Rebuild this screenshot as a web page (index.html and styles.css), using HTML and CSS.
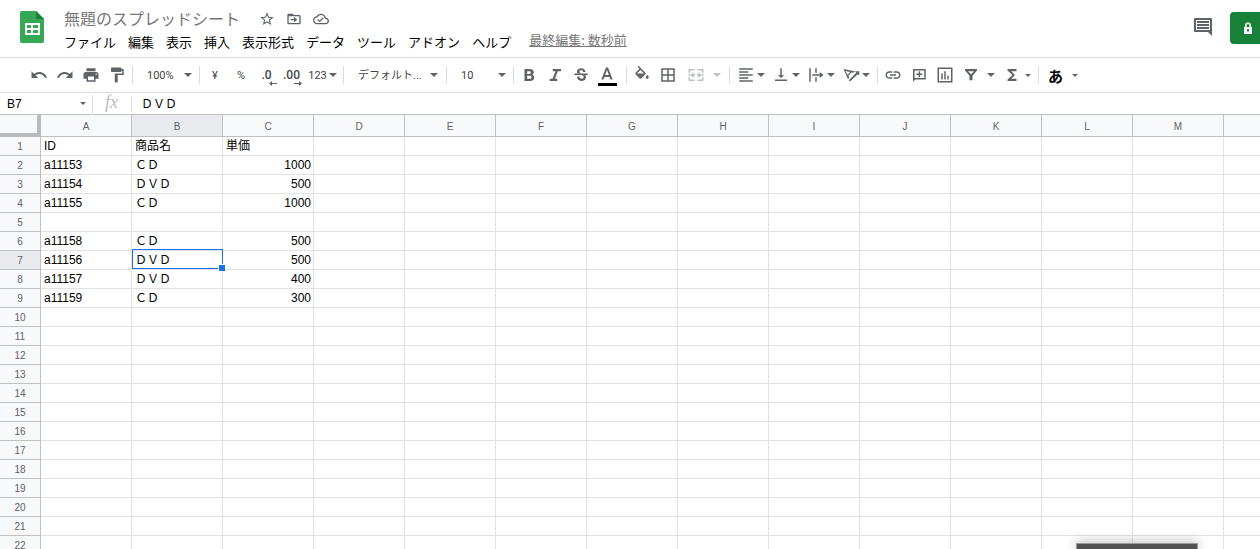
FILE: index.html
```html
<!DOCTYPE html>
<html lang="ja">
<head>
    <meta charset="UTF-8">
    <meta name="viewport" content="width=device-width, initial-scale=1.0">
    <title>無題のスプレッドシート</title>
    <link rel="stylesheet" href="styles.css">
</head>
<body>
    <header class="header">
        <svg class="logo" viewBox="0 0 24 32">
            <path fill="#34a853" d="M2 0h14l8 8v22a2 2 0 0 1-2 2H2a2 2 0 0 1-2-2V2a2 2 0 0 1 2-2z"/>
            <path fill="#188038" d="M16 0l8 8h-8z"/>
            <path fill="#fff" fill-rule="evenodd" d="M5 12h15v12H5zM7 14v3h4v-3zM13 14v3h5v-3zM7 19v3h4v-3zM13 19v3h5v-3z"/>
        </svg>
        <div class="header-main">
            <div class="title-row">
                <input class="title" type="text" aria-label="名前を変更" value="無題のスプレッドシート">
                <button class="title-btn" aria-label="スター"><svg viewBox="0 0 24 24"><path d="M22 9.24l-7.19-.62L12 2 9.19 8.63 2 9.24l5.46 4.73L5.82 21 12 17.27 18.18 21l-1.63-7.03L22 9.24zM12 15.4l-3.76 2.27 1-4.28-3.32-2.88 4.38-.38L12 6.1l1.71 4.04 4.38.38-3.32 2.88 1 4.28L12 15.4z"/></svg></button>
                <button class="title-btn" aria-label="移動"><svg viewBox="0 0 24 24"><path d="M20 6h-8l-2-2H4c-1.1 0-2 .9-2 2v12c0 1.1.9 2 2 2h16c1.1 0 2-.9 2-2V8c0-1.1-.9-2-2-2zm0 12H4V8h16v10zM7 12h5V9l5 4-5 4v-3H7z"/></svg></button>
                <button class="title-btn" aria-label="保存状況"><svg viewBox="0 0 24 24"><path d="M19.35 10.04C18.67 6.59 15.64 4 12 4 9.11 4 6.6 5.64 5.35 8.04 2.34 8.36 0 10.91 0 14c0 3.31 2.69 6 6 6h13c2.76 0 5-2.24 5-5 0-2.64-2.05-4.78-4.65-4.96zM19 18H6c-2.21 0-4-1.79-4-4 0-2.05 1.53-3.76 3.56-3.97l1.07-.11.5-.95C8.08 7.14 9.94 6 12 6c2.62 0 4.88 1.86 5.39 4.43l.3 1.5 1.53.11c1.56.1 2.78 1.41 2.78 2.96 0 1.65-1.35 3-3 3zm-9-3.82l-2.09-2.09L6.5 13.5 10 17l6.01-6.01-1.41-1.41z"/></svg></button>
            </div>
            <nav class="menu-row">
                <button>ファイル</button>
                <button>編集</button>
                <button>表示</button>
                <button>挿入</button>
                <button>表示形式</button>
                <button>データ</button>
                <button>ツール</button>
                <button>アドオン</button>
                <button>ヘルプ</button>
                <a class="last-edit" href="#">最終編集: 数秒前</a>
            </nav>
        </div>
        <button class="comments" aria-label="コメント履歴"><svg viewBox="0 0 20 20"><path fill-rule="evenodd" d="M2 1h16q1 0 1 1v17l-4-4H2q-1 0-1-1V2q0-1 1-1zM3 3v10h14V3z"/><path d="M4 4h12v2H4zM4 7h12v2H4zM4 10h12v2H4z"/></svg></button>
        <button class="share" aria-label="共有"><svg viewBox="0 0 10 12"><path fill="#fff" fill-rule="evenodd" d="M1 5h1V3.500a3 3 0 0 1 6 0V5h1v7H1zM3.500 5h3V3.500a1.500 1.500 0 0 0-3 0zM5 7a1.300 1.300 0 1 0 .01 0z"/></svg></button>
    </header>

    <div class="toolbar">
        <button class="tool" aria-label="元に戻す"><svg viewBox="0 0 24 24"><path d="M12.500 8c-2.650 0-5.050.990-6.900 2.600L2 7v9h9l-3.620-3.620c1.390-1.160 3.160-1.880 5.120-1.880 3.540 0 6.550 2.310 7.600 5.500l2.370-.780C21.080 11.030 17.150 8 12.500 8z"/></svg></button>
        <button class="tool" aria-label="やり直し"><svg viewBox="0 0 24 24"><path d="M18.400 10.600C16.550 8.990 14.150 8 11.500 8c-4.650 0-8.580 3.030-9.960 7.220L3.900 16c1.050-3.190 4.050-5.500 7.600-5.500 1.950 0 3.730.720 5.120 1.880L13 16h9V7l-3.600 3.600z"/></svg></button>
        <button class="tool" aria-label="印刷"><svg viewBox="0 0 24 24"><path d="M19 8H5c-1.660 0-3 1.340-3 3v6h4v4h12v-4h4v-6c0-1.660-1.340-3-3-3zm-3 11H8v-5h8v5zm3-7c-.55 0-1-.45-1-1s.45-1 1-1 1 .45 1 1-.45 1-1 1zm-1-9H6v4h12V3z"/></svg></button>
        <button class="tool" aria-label="書式を貼り付け"><svg viewBox="0 0 24 24"><path d="M18 4V3c0-.55-.45-1-1-1H5c-.55 0-1 .45-1 1v4c0 .55.45 1 1 1h12c.55 0 1-.45 1-1V6h1v4H9v11c0 .55.45 1 1 1h2c.55 0 1-.45 1-1v-9h8V4h-3z"/></svg></button>
        <span class="separator"></span>
        <label class="select zoom-select"><select aria-label="ズーム"><option>100%</option></select></label>
        <span class="separator"></span>
        <button class="tool">¥</button>
        <button class="tool">%</button>
        <button class="tool decimal" aria-label="小数点以下の桁数を減らす">.0<svg viewBox="0 0 8 5"><path d="M0 2.500L3 0v2h5v1H3v2z"/></svg></button>
        <button class="tool decimal" aria-label="小数点以下の桁数を増やす">.00<svg viewBox="0 0 8 5"><path d="M8 2.500L5 0v2H0v1h5v2z"/></svg></button>
        <button class="tool number-format">123<i class="arrow"></i></button>
        <span class="separator"></span>
        <label class="select font-select"><select aria-label="フォント"><option>デフォルト...</option></select></label>
        <span class="separator"></span>
        <label class="select size-select"><select aria-label="フォントサイズ"><option>10</option></select></label>
        <span class="separator"></span>
        <button class="tool" aria-label="太字"><svg viewBox="0 0 24 24"><path d="M16.500 11.800c1.100-.8 1.900-2.100 1.900-3.500C18.400 5.200 16 4 13 4H6v16h7.900c2.900 0 5.100-1.800 5.100-4.600 0-1.900-1-2.900-2.500-3.600zM9.500 7h3c1.100 0 2 .7 2 1.700s-.9 1.800-2 1.800h-3zm3.800 10H9.500v-4h3.800c1.400 0 2.200.900 2.200 2s-.800 2-2.200 2z"/></svg></button>
        <button class="tool" aria-label="斜体"><svg viewBox="0 0 24 24"><path d="M9 4v3h3.600L8.700 17H5v3h10v-3h-3.100l3.900-10H20V4z"/></svg></button>
        <button class="tool" aria-label="取り消し線"><svg viewBox="0 0 24 24"><path d="M7.200 9.800c-1.200-2.300-.5-5 2-6.100 3.700-1.700 8.700-.3 8.700 4.400h-3c0-3-4.500-3-4.900-.9-.2.900.5 1.700 1.500 2.100.6.400.8.400 1.200.5zM21 12v-2H3v2h9.600c1.800.7 3 1 3 2.700 0 3-5.800 3.100-5.800-.8h-3c-.3 4.800 4.500 6.500 7.700 5.800 3-.6 4.700-2.900 3.900-6.200-.1-.6-.3-1-.5-1.500z"/></svg></button>
        <button class="tool text-color" aria-label="テキストの色"><svg viewBox="0 0 24 24"><path d="M10.600 2L4.500 18h2.800l1.300-3.500h6.800l1.300 3.500h2.800L13.400 2zm-1.100 10L12 5.200l2.500 6.800z"/></svg></button>
        <span class="separator"></span>
        <button class="tool" aria-label="塗りつぶしの色"><svg viewBox="0 0 24 24"><path d="M16.560 8.940L7.620 0 6.210 1.410l2.380 2.380-5.150 5.150c-.590.590-.590 1.540 0 2.120l5.500 5.500c.290.290.680.440 1.060.440s.770-.150 1.060-.440l5.500-5.500c.590-.580.590-1.530 0-2.120zM5.210 10L10 5.210l2 2L14.790 10zM19 11.500s-2 2.170-2 3.500c0 1.100.900 2 2 2s2-.900 2-2c0-1.330-2-3.500-2-3.500z"/></svg></button>
        <button class="tool" aria-label="枠線"><svg viewBox="0 0 24 24"><path fill-rule="evenodd" d="M3 3h18v18H3zM5 5v6h6V5zM13 5v6h6V5zM5 13v6h6v-6zM13 13v6h6v-6z"/></svg></button>
        <button class="tool merge" aria-label="セルを結合" disabled><svg viewBox="0 0 24 24"><path d="M2 4h8v2H4v3H2zM14 4h8v5h-2V6h-6zM2 15h2v3h6v2H2zM20 15h2v5h-8v-2h6zM2 11h5V8l4 4-4 4v-3H2zM22 11h-5V8l-4 4 4 4v-3h5z"/></svg><i class="arrow"></i></button>
        <span class="separator"></span>
        <div class="align-group">
            <button class="tool menu-tool" aria-label="水平方向の配置"><svg viewBox="0 0 24 24"><path d="M3 3h18v2H3zM3 7h12v2H3zM3 11h18v2H3zM3 15h12v2H3zM3 19h18v2H3z"/></svg><i class="arrow"></i></button>
            <button class="tool menu-tool" aria-label="垂直方向の配置"><svg viewBox="0 0 24 24"><path d="M16 12h-3V3h-2v9H8l4 4zM4 18v2h16v-2z"/></svg><i class="arrow"></i></button>
            <button class="tool menu-tool" aria-label="テキストを折り返す"><svg viewBox="0 0 24 24"><path d="M3 3h2v18H3zM11 3h2v6h-2zM11 15h2v6h-2zM7 11h10V8l5 4-5 4v-3H7z"/></svg><i class="arrow"></i></button>
            <button class="tool menu-tool" aria-label="テキストの回転"><svg viewBox="0 0 24 24"><path fill-rule="evenodd" d="M2 4l15 3-2 2-2.500-.5-4 4 1 3L8 17.500zM4.500 6.500l3 5 3.500-3.500z"/><path d="M9 19L19 9l-2-2h6v6l-2-2-10.500 9.500z"/></svg><i class="arrow"></i></button>
        </div>
        <span class="separator"></span>
        <button class="tool" aria-label="リンクを挿入"><svg viewBox="0 0 24 24"><path d="M3.900 12c0-1.710 1.390-3.100 3.100-3.100h4V7H7c-2.760 0-5 2.240-5 5s2.240 5 5 5h4v-1.900H7c-1.710 0-3.100-1.390-3.100-3.100zM8 13h8v-2H8v2zm9-6h-4v1.900h4c1.710 0 3.100 1.390 3.100 3.100s-1.390 3.100-3.100 3.100h-4V17h4c2.760 0 5-2.240 5-5s-2.240-5-5-5z"/></svg></button>
        <button class="tool" aria-label="コメントを挿入"><svg viewBox="0 0 24 24"><path fill-rule="evenodd" d="M4 4h17v14H7l-3 3zM6 6v10h13V6z"/><path d="M11.500 7h2v3h3v2h-3v3h-2v-3h-3v-2h3z"/></svg></button>
        <button class="tool" aria-label="グラフを挿入"><svg viewBox="0 0 24 24"><path fill-rule="evenodd" d="M2 2h20v20H2zM4 4v16h16V4z"/><path d="M7 10h2v8H7zM11 7h2v11h-2zM15 13h2v5h-2z"/></svg></button>
        <button class="tool" aria-label="フィルタを作成"><svg viewBox="0 0 24 24"><path fill-rule="evenodd" d="M4 4h16v2l-6 7v6h-4v-6L4 6zM8 7l4 4 4-4z"/></svg></button>
        <button class="tool filter-menu" aria-label="フィルタ表示"><i class="arrow"></i></button>
        <button class="tool functions" aria-label="関数"><svg viewBox="0 0 24 24"><path d="M18 4H6v2l6.500 6L6 18v2h12v-3h-7l5-5-5-5h7z"/></svg><i class="arrow small"></i></button>
        <span class="separator"></span>
        <button class="tool input-method" aria-label="入力ツール">あ<i class="arrow small"></i></button>
    </div>

    <div class="formula-bar">
        <label class="select name-box"><input type="text" aria-label="名前ボックス" value="B7"></label>
        <span class="fx">fx</span>
        <input class="formula" type="text" aria-label="数式" value="ＤＶＤ">
    </div>

    <main class="sheet">
        <table class="grid" id="grid"></table>
    </main>
    <div class="popup"></div>

    <script>
        const columns = [..."ABCDEFGHIJKLM", ""];
        const rowCount = 22;
        const selected = { row: 7, col: "B" };
        const data = {
            1: ["ID", "商品名", "単価"],
            2: ["a11153", "ＣＤ", 1000],
            3: ["a11154", "ＤＶＤ", 500],
            4: ["a11155", "ＣＤ", 1000],
            6: ["a11158", "ＣＤ", 500],
            7: ["a11156", "ＤＶＤ", 500],
            8: ["a11157", "ＤＶＤ", 400],
            9: ["a11159", "ＣＤ", 300]
        };

        function addCell(row, tag, text, className) {
            const cell = document.createElement(tag);
            cell.textContent = text;
            if (className) cell.className = className;
            row.appendChild(cell);
        }

        const grid = document.getElementById("grid");
        const head = grid.createTHead().insertRow();
        addCell(head, "th", "", "corner");
        columns.forEach(col => addCell(head, "th", col, col === selected.col ? "current" : ""));

        const body = grid.createTBody();
        for (let r = 1; r <= rowCount; r++) {
            const row = body.insertRow();
            addCell(row, "th", r, r === selected.row ? "current" : "");
            columns.forEach((col, i) => {
                const value = data[r] && data[r][i] !== undefined ? data[r][i] : "";
                let className = typeof value === "number" ? "number" : "";
                if (r === selected.row && col === selected.col) className = "selected";
                addCell(row, "td", value, className);
            });
        }
    </script>
</body>
</html>
```
FILE: styles.css
```css
* {
    box-sizing: border-box;
}

body {
    margin: 0;
    height: 100vh;
    display: flex;
    flex-direction: column;
    overflow: hidden;
    background-color: white;
    color: black;
    font-family: "Liberation Sans", "Noto Sans CJK JP", sans-serif;
    font-size: 12px;
}

button, input, select {
    font-family: inherit;
    border: none;
    padding: 0;
    margin: 0;
    background: none;
    outline: none;
}

button {
    cursor: pointer;
}

svg {
    display: block;
    flex: none;
    fill: #5f6368;
}

/* header */
.header {
    display: flex;
    align-items: flex-start;
    height: 58px;
    flex: none;
    border-bottom: 1px solid #dadce0;
}

.logo {
    width: 24px;
    height: 32px;
    margin: 11px 20px 0;
}

.header-main {
    flex: 1;
    padding-top: 6px;
}

.title-row {
    display: flex;
    align-items: center;
    height: 24px;
}

.title {
    width: 189px;
    height: 24px;
    font-size: 16px;
    color: #777;
}

.title-btn {
    width: 27px;
    height: 24px;
    padding-top: 2px;
    display: flex;
    align-items: center;
    justify-content: center;
}

.title-btn svg {
    width: 16px;
    height: 16px;
}

.menu-row {
    display: flex;
    gap: 12px;
    height: 26px;
}

.menu-row button {
    font-size: 13px;
    line-height: 26px;
    color: black;
    white-space: nowrap;
}

.last-edit {
    margin-left: 6px;
    font-family: "Noto Sans CJK JP", sans-serif;
    font-size: 13px;
    line-height: 20px;
    color: #777;
}

.comments {
    margin: 17px 17px 0 0;
}

.comments svg {
    width: 20px;
    height: 20px;
}

.share {
    width: 30px;
    height: 32px;
    margin-top: 12px;
    padding-left: 13px;
    background-color: #188038;
    border-radius: 4px 0 0 4px;
}

.share svg {
    width: 10px;
    height: 12px;
}

/* toolbar */
.toolbar {
    display: flex;
    align-items: center;
    height: 35px;
    flex: none;
    padding-left: 26px;
    border-bottom: 1px solid #dadce0;
    font-family: Roboto, "Noto Sans CJK JP", sans-serif;
}

.tool {
    position: relative;
    display: flex;
    align-items: center;
    justify-content: center;
    flex: none;
    width: 26px;
    height: 26px;
    font-size: 11px;
    color: #444;
}

.tool svg {
    width: 18px;
    height: 18px;
}

.separator {
    flex: none;
    width: 1px;
    height: 18px;
    margin: 0 2px;
    background-color: #dadce0;
}

.arrow, .select::after {
    content: "";
    flex: none;
    border: 4px solid transparent;
    border-top-color: #5f6368;
    border-bottom: none;
}

.arrow.small, .name-box::after {
    border-width: 3px;
    border-bottom: none;
}

.select {
    display: flex;
    align-items: center;
    flex: none;
    height: 26px;
    padding: 0 5px 0 12px;
}

.select select, .select input {
    flex: 1;
    min-width: 0;
    appearance: none;
    font-size: 11px;
    color: #444;
}

.zoom-select {
    width: 62px;
}

.font-select {
    width: 98px;
    padding-right: 6px;
}

.size-select {
    width: 62px;
}

.decimal {
    width: 25px;
    font-size: 12px;
    font-weight: 500;
}

.tool.decimal svg {
    position: absolute;
    right: 2px;
    bottom: 2px;
    width: 8px;
    height: 5px;
}

.number-format {
    width: 37px;
    gap: 2px;
    font-size: 11px;
}

.text-color {
    margin-right: 4px;
}

.text-color::after {
    content: "";
    position: absolute;
    left: 4px;
    right: 3px;
    bottom: 2px;
    height: 3px;
    background-color: black;
}

.merge {
    width: 46px;
    gap: 8px;
    opacity: 0.4;
}

.align-group {
    display: flex;
    padding: 0 2px 0 1px;
}

.menu-tool {
    width: 35px;
    gap: 2px;
}

.filter-menu {
    width: 14px;
}

.functions {
    width: 38px;
    gap: 4px;
}

.input-method {
    width: 44px;
    gap: 9px;
    font-size: 15px;
    font-weight: 700;
    color: black;
}

/* formula bar */
.formula-bar {
    display: flex;
    align-items: center;
    height: 22px;
    flex: none;
    border-bottom: 1px solid #c0c0c0;
}

.name-box {
    width: 93px;
    height: 18px;
    padding: 0 6px 0 7px;
    border-right: 1px solid #dadce0;
}

.name-box input, .formula {
    font-size: 12px;
    line-height: 16px;
    color: black;
}

.fx {
    width: 39px;
    height: 16px;
    padding-left: 12px;
    border-right: 1px solid #dadce0;
    font-family: "Liberation Serif", serif;
    font-size: 18px;
    font-style: italic;
    line-height: 12px;
    color: #bbb;
}

.formula {
    flex: 1;
    height: 18px;
    padding: 0 0 2px 9px;
}

/* sheet */
.sheet {
    flex: 1;
    min-height: 0;
    overflow: hidden;
}

.grid {
    width: 1315px;
    table-layout: fixed;
    border-collapse: separate;
    border-spacing: 0;
}

.grid th, .grid td {
    height: 19px;
    line-height: 17px;
    overflow: hidden;
    white-space: nowrap;
}

.grid th {
    padding: 1px 0 0;
    background-color: #f8f9fa;
    border-right: 1px solid #c0c0c0;
    border-bottom: 1px solid #c0c0c0;
    font-size: 10px;
    font-weight: 400;
    color: #5f6368;
}

.grid thead th {
    width: 91px;
    height: 22px;
}

.grid thead .corner {
    width: 41px;
    border-right: 4px solid #bbb;
    border-bottom: 4px solid #bbb;
}

.grid th.current {
    background-color: #e8eaed;
}

.grid td {
    padding: 1px 2px 0 3px;
    border-right: 1px solid #e2e2e2;
    border-bottom: 1px solid #e2e2e2;
}

.grid .number {
    text-align: right;
}

.grid .selected {
    position: relative;
    overflow: visible;
}

.selected::before {
    content: "";
    position: absolute;
    inset: -2px -1px 0 0;
    border: 1px solid #1a73e8;
}

.selected::after {
    content: "";
    position: absolute;
    right: -3px;
    bottom: -2px;
    width: 6px;
    height: 6px;
    background-color: #1a73e8;
    border: 1px solid white;
    border-right: none;
    border-bottom: none;
}

/* top edge of the notice at the bottom of the window */
.popup {
    position: absolute;
    right: 62px;
    bottom: 0;
    width: 122px;
    height: 6px;
    background-color: #505050;
    border: 1px solid #999;
    border-bottom: none;
    box-shadow: 0 0 12px rgba(0, 0, 0, 0.4);
}
```
